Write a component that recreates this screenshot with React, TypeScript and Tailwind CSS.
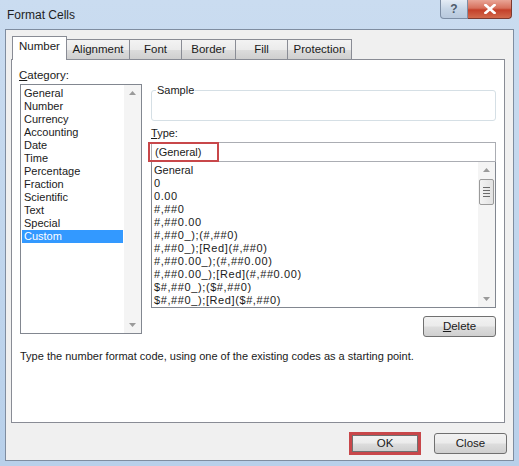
import { useState } from "react";

const categories = [
  "General",
  "Number",
  "Currency",
  "Accounting",
  "Date",
  "Time",
  "Percentage",
  "Fraction",
  "Scientific",
  "Text",
  "Special",
  "Custom",
];

const formats = [
  "General",
  "0",
  "0.00",
  "#,##0",
  "#,##0.00",
  "#,##0_);(#,##0)",
  "#,##0_);[Red](#,##0)",
  "#,##0.00_);(#,##0.00)",
  "#,##0.00_);[Red](#,##0.00)",
  "$#,##0_);($#,##0)",
  "$#,##0_);[Red]($#,##0)",
];

const tabs = ["Number", "Alignment", "Font", "Border", "Fill", "Protection"];
const tabWidths = ["w-[55px]", "w-[64px]", "w-[53px]", "w-[55px]", "w-[53px]", "w-[65px]"];

function UpArrow() {
  return (
    <svg width="7" height="4" viewBox="0 0 7 4">
      <path d="M0 4 L3.5 0 L7 4 Z" fill="#9a9a9a" />
    </svg>
  );
}

function DownArrow() {
  return (
    <svg width="7" height="4" viewBox="0 0 7 4">
      <path d="M0 0 L3.5 4 L7 0 Z" fill="#9a9a9a" />
    </svg>
  );
}

function WinButton({
  children,
  className = "",
}: {
  children: React.ReactNode;
  className?: string;
}) {
  return (
    <button
      className={
        "flex items-center justify-center rounded-[3px] border border-[#707070] bg-[linear-gradient(#f2f2f2_0%,#ebebeb_48%,#dddddd_52%,#cfcfcf_100%)] text-[11.5px] font-normal text-[#1a1a1a] " +
        className
      }
    >
      {children}
    </button>
  );
}

export default function App() {
  const [category, setCategory] = useState("Custom");
  const [tab, setTab] = useState("Number");

  return (
    <div
      className="flex h-[466px] w-[519px] flex-col overflow-hidden bg-[linear-gradient(#cadcf0,#b8d0ea)] text-[11px] text-[#1a1a1a]"
      style={{ fontFamily: '"Segoe UI", "Liberation Sans", Arial, sans-serif' }}
    >
      {/* title bar */}
      <div className="flex h-[29px] shrink-0 items-start justify-between">
        <div className="pl-[7px] pt-[6px] text-[12px] text-[#1e1e1e]">Format Cells</div>
        <div className="mr-[7px] flex">
          <div className="flex h-[19px] w-[28px] items-center justify-center rounded-bl-[4px] border border-t-0 border-[#7d8ea5] bg-[linear-gradient(#e4ecf5,#c6d5e6_50%,#b8c9dd)] text-[12px] font-bold text-[#4e5a6a]">
            ?
          </div>
          <div className="flex h-[19px] w-[44px] items-center justify-center rounded-br-[4px] border border-l-0 border-t-0 border-[#7d3a30] bg-[linear-gradient(#e9a596,#d7705c_45%,#c4402a_55%,#d26a4d)]">
            <svg width="12" height="10" viewBox="0 0 12 10">
              <path
                d="M1.5 1 L10.5 9 M10.5 1 L1.5 9"
                stroke="#ffffff"
                strokeWidth="2.6"
                strokeLinecap="square"
              />
            </svg>
          </div>
        </div>
      </div>

      {/* client area */}
      <div className="mx-[5px] flex h-[432px] shrink-0 flex-col border border-[#7f8da0] bg-[#f0f0f0] pl-[5px] pr-[6px] pt-[6px]">
        {/* tabs */}
        <div className="flex h-[23px] items-end">
          {tabs.map((t, i) => {
            const active = t === tab;
            return (
              <div
                key={t}
                onClick={() => setTab(t)}
                className={
                  "relative flex cursor-default items-center justify-center border border-b-0 border-[#898c95] text-[11.5px] " +
                  tabWidths[i] +
                  (i === 0 ? " ml-px" : " -ml-px") +
                  (active
                    ? " z-10 h-[23px] bg-white pb-[2px]"
                    : " h-[20px] bg-[linear-gradient(#f3f3f3,#ebebeb_50%,#dddddd_51%,#cfcfcf)]")
                }
              >
                {t}
                {active && <div className="absolute -bottom-px left-0 right-0 h-px bg-white" />}
              </div>
            );
          })}
        </div>

        {/* panel */}
        <div className="flex h-[364px] w-[494px] flex-col border border-[#898c95] bg-white pl-[8px]">
          <div className="flex">
            {/* category */}
            <div className="flex w-[131px] flex-col">
              <div className="mt-[7px] h-[17px] -ml-px text-[11.5px]">
                <span className="underline">C</span>ategory:
              </div>
              <div className="flex h-[250px] w-[122px] border border-[#828790] bg-white">
                <div className="flex-1 px-px pt-[2px]">
                  {categories.map((c) => (
                    <div
                      key={c}
                      onClick={() => setCategory(c)}
                      className={
                        "h-[13px] pl-[2px] leading-[13px] " +
                        (c === category ? "bg-[#3399ff] text-white" : "")
                      }
                    >
                      {c}
                    </div>
                  ))}
                </div>
                <div className="flex w-[17px] flex-col items-center justify-between bg-[#f4f4f4] py-[6px]">
                  <UpArrow />
                  <DownArrow />
                </div>
              </div>
            </div>

            {/* right column */}
            <div className="flex w-[345px] flex-col">
              <div className="relative mt-[30px] h-[31px] rounded-[3px] border border-[#d5dfe5]">
                <span className="absolute -top-[9px] left-[4px] bg-white px-px">Sample</span>
              </div>
              <div className="mt-[4px] h-[17px] leading-[17px]">
                <span className="underline">T</span>ype:
              </div>
              <div className="relative h-[20px] border border-[#abadb3] pl-[3px] leading-[18px]">
                (General)
                <div className="absolute -left-[4px] -top-px h-[20px] w-[71px] border-2 border-[#c8474a]" />
              </div>
              <div className="-mt-px flex h-[147px] border border-[#828790]">
                <div className="flex-1 pl-[2px] pt-[2px]">
                  {formats.map((f, i) => (
                    <div
                      key={f}
                      className={
                        "h-[13px] whitespace-nowrap leading-[13px]" +
                        (i > 0 ? " tracking-[0.6px]" : "")
                      }
                    >
                      {f}
                    </div>
                  ))}
                </div>
                <div className="flex w-[17px] flex-col items-center bg-[#f4f4f4] pb-[6px] pt-[6px]">
                  <UpArrow />
                  <div className="mt-[7px] flex h-[26px] w-[15px] flex-col items-center justify-center gap-[2px] rounded-[2px] border border-[#9a9a9a] bg-[linear-gradient(90deg,#f3f3f3,#e2e2e2)]">
                    <div className="h-px w-[7px] bg-[#6b6b6b]" />
                    <div className="h-px w-[7px] bg-[#6b6b6b]" />
                    <div className="h-px w-[7px] bg-[#6b6b6b]" />
                    <div className="h-px w-[7px] bg-[#6b6b6b]" />
                  </div>
                  <div className="flex-1" />
                  <DownArrow />
                </div>
              </div>
              <div className="mt-[8px] flex justify-end">
                <WinButton className="h-[21px] w-[73px]">
                  <span className="underline">D</span>elete
                </WinButton>
              </div>
            </div>
          </div>
          <div className="mt-[11px]">
            Type the number format code, using one of the existing codes as a starting point.
          </div>
        </div>

        {/* footer buttons */}
        <div className="mt-[9px] flex justify-end gap-[13px]">
          <div className="border-[3px] border-[#c8474a]">
            <WinButton className="h-[17px] w-[66px] rounded-none border-[#8a8a8a]">OK</WinButton>
          </div>
          <WinButton className="mt-px h-[21px] w-[73px]">Close</WinButton>
        </div>
      </div>
    </div>
  );
}
